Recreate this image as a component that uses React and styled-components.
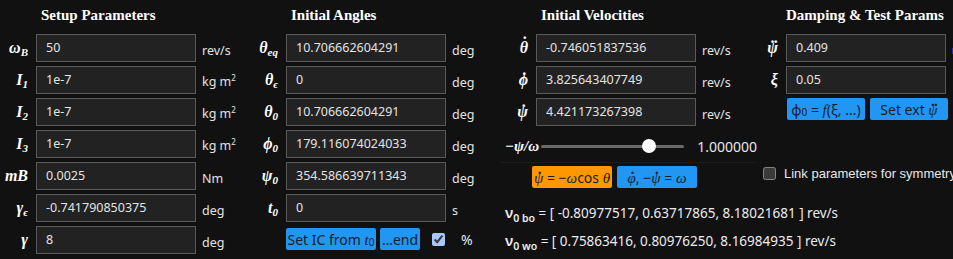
import styled, { createGlobalStyle } from 'styled-components'

const GlobalStyle = createGlobalStyle`
  html, body {
    margin: 0;
    background: #111111;
    color: #dddddd;
    overflow: hidden;
  }
  body {
    font-family: "Noto Sans", "Liberation Sans", sans-serif;
  }
`

const Page = styled.div`
  display: grid;
  grid-template-columns: repeat(4, 250px);
  width: 953px;
  height: 259px;
  overflow: hidden;
`

const Column = styled.div`
  display: flex;
  flex-direction: column;
`

const Heading = styled.div`
  height: 34px;
  padding-left: ${p => p.$indent}px;
  font-family: "Liberation Serif", "DejaVu Serif", serif;
  font-weight: bold;
  font-size: 15px;
  line-height: 30px;
  color: #ffffff;
  white-space: nowrap;
`

const Row = styled.div`
  display: grid;
  grid-template-columns: 28px 160px auto;
  column-gap: 8px;
  align-items: center;
  height: 28px;
  margin-bottom: 4px;
`

const Label = styled.div`
  text-align: right;
  font-family: "Liberation Serif", "DejaVu Serif", serif;
  font-style: italic;
  font-weight: bold;
  font-size: 16px;
  color: #ffffff;
  white-space: nowrap;
  sub {
    font-size: 11px;
    vertical-align: -3px;
  }
`

/* a letter with a time-derivative dot (or two) set above it */
const Dotted = styled.span`
  position: relative;
  display: inline-block;
  &::after {
    content: '${p => (p.$n === 2 ? '..' : '.')}';
    position: absolute;
    left: 0;
    right: -2px;
    top: ${p => p.$top ?? -0.62}em;
    text-align: center;
    font-style: normal;
    font-weight: bold;
    letter-spacing: ${p => (p.$n === 2 ? '-0.05em' : 0)};
  }
`

const Field = styled.input`
  box-sizing: border-box;
  width: 160px;
  height: 28px;
  padding: 0 0 2px 9px;
  background: #222222;
  border: 1px solid #5a5a5a;
  color: #e2e2e2;
  font-family: "Noto Sans", "Liberation Sans", sans-serif;
  font-size: 12.5px;
  outline: none;
`

const Unit = styled.span`
  margin-left: -2px;
  padding-top: ${p => (p.$low ? 5 : 2)}px;
  font-size: 12.5px;
  color: #e2e2e2;
  white-space: nowrap;
  sup {
    font-size: 8px;
    vertical-align: 5px;
  }
`

const EdgeMark = styled.span`
  display: block;
  width: 6px;
  height: 6px;
  margin: 6px 0 0 -2px;
  background: #1a2bd6;
`

const ButtonRow = styled.div`
  display: flex;
  align-items: center;
  gap: ${p => p.$gap}px;
  padding-left: ${p => p.$indent}px;
  height: ${p => p.$h}px;
`

const Btn = styled.button`
  box-sizing: border-box;
  height: 22px;
  width: ${p => p.$w}px;
  padding: 0;
  border: none;
  border-radius: 2px;
  background: ${p => (p.$orange ? '#ff9800' : '#2196f3')};
  color: #14202e;
  font-family: "Noto Sans", "Liberation Sans", sans-serif;
  font-size: 14px;
  white-space: nowrap;
  overflow: hidden;
  i {
    font-family: "Liberation Serif", serif;
    font-size: 15px;
  }
  sub {
    font-size: 10px;
    vertical-align: -1px;
  }
`

const Check = styled.input`
  width: 13px;
  height: 13px;
  margin: 0 0 0 ${p => p.$ml}px;
  color-scheme: ${p => (p.checked ? 'light' : 'dark')};
  accent-color: #a8c7fa;
`

const CheckText = styled.span`
  margin-left: ${p => p.$ml}px;
  font-family: ${p => (p.$narrow ? '"Liberation Sans", Arial' : '"Noto Sans"')}, sans-serif;
  font-size: ${p => p.$size || 14}px;
  color: #e8e8e8;
  white-space: nowrap;
`

const SliderRow = styled.div`
  display: flex;
  align-items: center;
  height: 32px;
  padding-left: 5px;
  border-bottom: 1px solid #1b1b1b;
  margin-bottom: 3px;
  width: 252px;
`

const SliderLabel = styled.span`
  font-family: "Liberation Serif", "DejaVu Serif", serif;
  font-style: italic;
  font-weight: bold;
  font-size: 15px;
  color: #fff;
  width: 37px;
`

const Track = styled.div`
  position: relative;
  width: 145px;
  height: 3px;
  background: #6a6a6a;
  border-radius: 2px;
`

const Thumb = styled.div`
  position: absolute;
  top: -6px;
  width: 14px;
  height: 14px;
  margin-left: -7px;
  border-radius: 50%;
  background: #ffffff;
`

const SliderValue = styled.span`
  margin-left: 13px;
  font-size: 14px;
  color: #e8e8e8;
`

const Vector = styled.div`
  padding-left: 5px;
  height: 28px;
  line-height: 28px;
  font-size: 13.5px;
  color: #ececec;
  white-space: nowrap;
  b {
    font-size: 15px;
    font-weight: 600;
  }
  sub {
    font-weight: 600;
    font-size: 10.5px;
    vertical-align: -4px;
  }
`

const CheckRow = styled.div`
  display: flex;
  align-items: center;
  height: 30px;
  margin-top: 38px;
`

const setup = [
  [<>ω<sub>B</sub></>, '50', 'rev/s'],
  [<>I<sub>1</sub></>, '1e-7', 'kgm2'],
  [<>I<sub>2</sub></>, '1e-7', 'kgm2'],
  [<>I<sub>3</sub></>, '1e-7', 'kgm2'],
  [<>mB</>, '0.0025', 'Nm'],
  [<>γ<sub>ϵ</sub></>, '-0.741790850375', 'deg'],
  [<>γ</>, '8', 'deg'],
]

const angles = [
  [<>θ<sub>eq</sub></>, '10.706662604291', 'deg'],
  [<>θ<sub>ϵ</sub></>, '0', 'deg'],
  [<>θ<sub>0</sub></>, '10.706662604291', 'deg'],
  [<>ϕ<sub>0</sub></>, '179.116074024033', 'deg'],
  [<>ψ<sub>0</sub></>, '354.586639711343', 'deg'],
  [<>t<sub>0</sub></>, '0', 's'],
]

const velocities = [
  [<Dotted $top={-0.85}>θ</Dotted>, '-0.746051837536'],
  [<Dotted>ϕ</Dotted>, '3.825643407749'],
  [<Dotted>ψ</Dotted>, '4.421173267398'],
]

const renderUnit = (u) =>
  u === 'kgm2' ? <Unit>kg m<sup>2</sup></Unit> : <Unit $low>{u}</Unit>

const ParamRow = ({ label, value, unit }) => (
  <Row>
    <Label>{label}</Label>
    <Field defaultValue={value} />
    {unit}
  </Row>
)

export default function App() {
  return (
    <>
      <GlobalStyle />
      <Page>
        <Column>
          <Heading $indent={41}>Setup Parameters</Heading>
          {setup.map(([l, v, u], i) => (
            <ParamRow key={i} label={l} value={v} unit={renderUnit(u)} />
          ))}
        </Column>

        <Column>
          <Heading $indent={41}>Initial Angles</Heading>
          {angles.map(([l, v, u], i) => (
            <ParamRow key={i} label={l} value={v} unit={renderUnit(u)} />
          ))}
          <ButtonRow $indent={36} $gap={4} $h={26}>
            <Btn $w={90}>Set IC from <i>t</i><sub>0</sub></Btn>
            <Btn $w={40}>…end</Btn>
            <Check type="checkbox" defaultChecked $ml={8} />
            <CheckText $ml={12}>%</CheckText>
          </ButtonRow>
        </Column>

        <Column>
          <Heading $indent={41}>Initial Velocities</Heading>
          {velocities.map(([l, v], i) => (
            <ParamRow key={i} label={l} value={v} unit={renderUnit('rev/s')} />
          ))}
          <SliderRow>
            <SliderLabel>−ψ/ω</SliderLabel>
            <Track>
              <Thumb style={{ left: `${(651 - 542) / 145 * 100}%` }} />
            </Track>
            <SliderValue>1.000000</SliderValue>
          </SliderRow>
          <ButtonRow $indent={32} $gap={5} $h={22}>
            <Btn $orange $w={80}><i><Dotted $top={-0.55}>ψ</Dotted></i> = −<i>ω</i>cos <i>θ</i></Btn>
            <Btn $w={80}><i><Dotted $top={-0.55}>φ</Dotted></i>, −<i><Dotted $top={-0.55}>ψ</Dotted></i> = <i>ω</i></Btn>
          </ButtonRow>
          <Vector style={{ marginTop: 10 }}>
            <b>ν</b><sub>0 bo</sub> = [ -0.80977517, 0.63717865, 8.18021681 ] rev/s
          </Vector>
          <Vector>
            <b>ν</b><sub>0 wo</sub> = [ 0.75863416, 0.80976250, 8.16984935 ] rev/s
          </Vector>
        </Column>

        <Column>
          <Heading $indent={36}>Damping &amp; Test Params</Heading>
          <ParamRow label={<Dotted $n={2}>ψ</Dotted>} value="0.409" unit={<EdgeMark />} />
          <ParamRow label="ξ" value="0.05" />
          <ButtonRow $indent={37} $gap={5} $h={22}>
            <Btn $w={78}>φ<sub>0</sub> = <i>f</i>(ξ, ...)</Btn>
            <Btn $w={78}>Set ext <i><Dotted $n={2} $top={-0.55}>ψ</Dotted></i></Btn>
          </ButtonRow>
          <CheckRow>
            <Check type="checkbox" $ml={13} />
            <CheckText $ml={8} $size={13} $narrow>Link parameters for symmetry</CheckText>
          </CheckRow>
        </Column>
      </Page>
    </>
  )
}
